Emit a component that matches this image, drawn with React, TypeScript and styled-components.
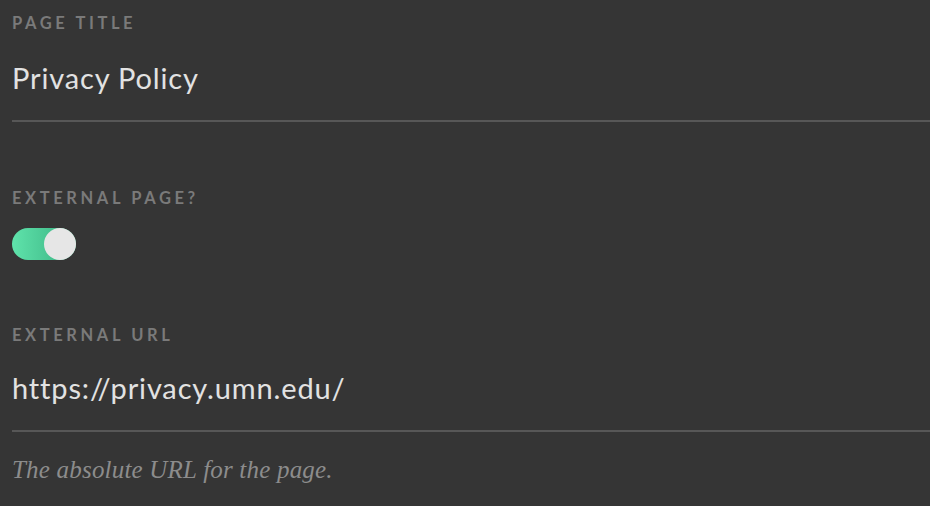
import React from "react";
import styled, { createGlobalStyle } from "styled-components";

const Global = createGlobalStyle`
  html, body { margin: 0; padding: 0; background: #353535; }
  body { width: 930px; height: 506px; overflow: hidden; }
`;

const Page = styled.div`
  width: 930px;
  height: 506px;
  background: #353535;
  padding: 13px 0 0 12px;
  box-sizing: border-box;
  font-family: Lato, "Liberation Sans", sans-serif;
  display: flex;
  flex-direction: column;
`;

const Field = styled.div<{ $mt?: number }>`
  display: flex;
  flex-direction: column;
  margin-top: ${(p) => p.$mt ?? 0}px;
`;

const Label = styled.div`
  font-size: 16.5px;
  font-weight: 700;
  letter-spacing: 3.6px;
  color: #7a7a7a;
  text-transform: uppercase;
  line-height: 20px;
`;

const Value = styled.div<{ $mt: number }>`
  font-size: 29px;
  letter-spacing: 0.85px;
  color: #e2e2e2;
  line-height: 40px;
  margin-top: ${(p) => p.$mt}px;
  padding-bottom: 22px;
  border-bottom: 2px solid #575757;
`;

const Help = styled.div`
  font-family: "Liberation Serif", "DejaVu Serif", serif;
  font-style: italic;
  font-size: 25px;
  letter-spacing: 0.2px;
  color: #8c8c8c;
  margin-top: 23px;
  line-height: 30px;
`;

const Toggle = styled.div<{ $on: boolean }>`
  margin-top: 20px;
  width: 64px;
  height: 32px;
  border-radius: 16px;
  background: ${(p) => (p.$on ? "linear-gradient(90deg, #5fe3ab, #38af80)" : "#555")};
  display: flex;
  justify-content: ${(p) => (p.$on ? "flex-end" : "flex-start")};
`;

const Knob = styled.div`
  width: 32px;
  height: 32px;
  border-radius: 50%;
  background: #e6e6e6;
`;

export default function App() {
  return (
    <>
      <Global />
      <Page>
        <Field>
          <Label>Page Title</Label>
          <Value $mt={25}>Privacy Policy</Value>
        </Field>
        <Field $mt={66}>
          <Label>External Page?</Label>
          <Toggle $on>
            <Knob />
          </Toggle>
        </Field>
        <Field $mt={65}>
          <Label>External URL</Label>
          <Value $mt={23}>https://privacy.umn.edu/</Value>
          <Help>The absolute URL for the page.</Help>
        </Field>
      </Page>
    </>
  );
}
